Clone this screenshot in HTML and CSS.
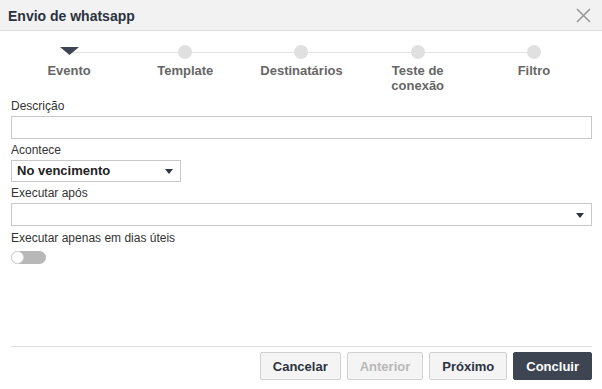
FILE: index.html
```html
<!DOCTYPE html>
<html lang="pt">
<head>
<meta charset="utf-8">
<title>Envio de whatsapp</title>
<link rel="stylesheet" href="styles.css">
</head>
<body>
<div class="dialog">
  <header class="dlg-header">
    <h1 class="dlg-title">Envio de whatsapp</h1>
    <button class="dlg-close" aria-label="Fechar">
      <svg width="15" height="15" viewBox="0 0 15 15"><path d="M1 1 L14 14 M14 1 L1 14" stroke="#9a9a9a" stroke-width="1.6" fill="none"/></svg>
    </button>
  </header>

  <div class="dlg-body">
    <ol class="stepper">
      <li class="step active">
        <span class="marker"><svg width="19" height="8" viewBox="0 0 19 8"><polygon points="0,0 19,0 9.5,8" fill="#3d4553"/></svg></span>
        <span class="step-label">Evento</span>
      </li>
      <li class="step"><span class="marker"><span class="dot"></span></span><span class="step-label">Template</span></li>
      <li class="step"><span class="marker"><span class="dot"></span></span><span class="step-label">Destinatários</span></li>
      <li class="step"><span class="marker"><span class="dot"></span></span><span class="step-label">Teste de<br>conexão</span></li>
      <li class="step"><span class="marker"><span class="dot"></span></span><span class="step-label">Filtro</span></li>
    </ol>

    <form class="form">
      <div class="field">
        <label class="lbl">Descrição</label>
        <div class="input"></div>
      </div>
      <div class="field">
        <label class="lbl">Acontece</label>
        <div class="input select short"><span class="sel-value">No vencimento</span><span class="caret"></span></div>
      </div>
      <div class="field">
        <label class="lbl">Executar após</label>
        <div class="input select"><span class="sel-value"></span><span class="caret"></span></div>
      </div>
      <div class="field field-switch">
        <label class="lbl">Executar apenas em dias úteis</label>
        <div class="toggle"><span class="knob"></span></div>
      </div>
    </form>

    <footer class="dlg-footer">
      <button class="btn">Cancelar</button>
      <button class="btn disabled">Anterior</button>
      <button class="btn">Próximo</button>
      <button class="btn primary">Concluir</button>
    </footer>
  </div>
</div>
</body>
</html>
```

FILE: styles.css
```css
* { box-sizing: border-box; }
html, body { margin: 0; padding: 0; background: #fff; }
body { font-family: "Liberation Sans", Arial, sans-serif; color: #333; }

.dialog { width: 602px; height: 389px; display: flex; flex-direction: column; }

.dlg-header {
  height: 31px;
  background: #f2f2f2;
  border-bottom: 1px solid #dcdcdc;
  display: flex;
  align-items: center;
  justify-content: space-between;
  padding: 0 11px 0 8px;
}
.dlg-title { margin: 0; font-size: 14px; font-weight: bold; color: #2b3240; line-height: 16px; padding-top: 1px; }
.dlg-close { border: 0; background: none; padding: 0; width: 15px; height: 15px; display: flex; cursor: pointer; margin-top: 1px; }

.dlg-body { flex: 1; display: flex; flex-direction: column; padding: 0 10px 0 11px; }

.stepper {
  list-style: none;
  margin: 0;
  padding: 14px 0 0 0;
  display: grid;
  grid-template-columns: repeat(5, 1fr);
  position: relative;
}
.stepper::before {
  content: "";
  position: absolute;
  left: 10%;
  right: 10%;
  top: 21px;
  height: 1px;
  background: #e3e3e3;
}
.step { display: flex; flex-direction: column; align-items: center; position: relative; }
.marker { height: 14px; width: 19px; display: flex; justify-content: center; align-items: flex-start; }
.step.active .marker svg { margin-top: 2px; }
.dot { width: 14px; height: 14px; border-radius: 50%; background: #e0e0e0; display: block; }
.step-label { margin-top: 4px; font-size: 13px; line-height: 15px; font-weight: bold; color: #666; text-align: center; }

.form { margin-top: 5px; display: flex; flex-direction: column; gap: 3px; }
.field { display: flex; flex-direction: column; }
.field-switch { margin-top: 1px; }
.lbl { font-size: 12px; line-height: 16px; color: #333; margin-bottom: 2px; }
.input { height: 23px; border: 1px solid #c8c8c8; background: #fff; width: 100%; }
.select { display: flex; align-items: center; justify-content: space-between; padding: 0 7px 0 5px; }
.select.short { width: 170px; height: 22px; padding-right: 7px; }
.sel-value { font-size: 13px; font-weight: bold; color: #222; line-height: 16px; }
.caret { width: 0; height: 0; border-left: 4px solid transparent; border-right: 4px solid transparent; border-top: 5px solid #2f3644; margin-top: 1px; }

.toggle { margin-top: 3px; width: 35px; height: 13px; border-radius: 7px; background: #b8b8b8; position: relative; }
.knob { position: absolute; left: 0; top: 0; width: 13px; height: 13px; border-radius: 50%; background: #fff; border: 1px solid #d4d4d4; }

.dlg-footer {
  margin-top: auto;
  margin-bottom: 9px;
  border-top: 1px solid #e0e0e0;
  padding-top: 5px;
  display: flex;
  justify-content: flex-end;
  gap: 6px;
}
.btn {
  height: 28px;
  padding: 0 12px;
  font-family: "Liberation Sans", Arial, sans-serif;
  font-size: 13px;
  font-weight: bold;
  color: #2b3240;
  background: #f4f4f4;
  border: 1px solid #d2d2d2;
  border-radius: 2px;
}
.btn.disabled { color: #b8b8b8; }
.btn.primary { background: #3d4553; border-color: #3d4553; color: #fff; padding: 0 12px; }
```
